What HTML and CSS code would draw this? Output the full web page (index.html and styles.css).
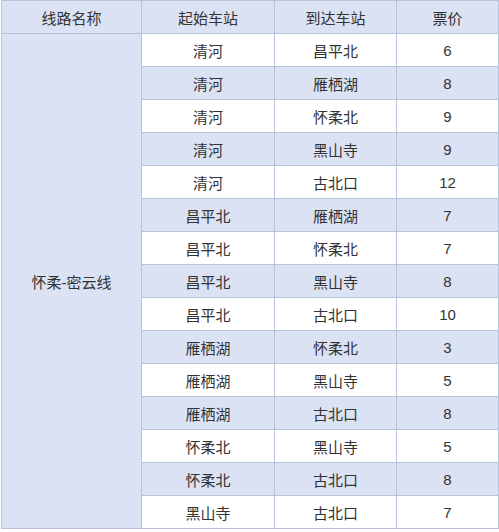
FILE: index.html
```html
<!DOCTYPE html>
<html lang="zh">
<head>
<meta charset="utf-8">
<link rel="stylesheet" href="styles.css">
</head>
<body>
<table class="fares">
  <colgroup>
    <col class="c1"><col class="c2"><col class="c3"><col class="c4">
  </colgroup>
  <thead>
    <tr><th>线路名称</th><th>起始车站</th><th>到达车站</th><th>票价</th></tr>
  </thead>
  <tbody>
    <tr><td class="line" rowspan="15">怀柔-密云线</td><td>清河</td><td>昌平北</td><td>6</td></tr>
    <tr class="alt"><td>清河</td><td>雁栖湖</td><td>8</td></tr>
    <tr><td>清河</td><td>怀柔北</td><td>9</td></tr>
    <tr class="alt"><td>清河</td><td>黑山寺</td><td>9</td></tr>
    <tr><td>清河</td><td>古北口</td><td>12</td></tr>
    <tr class="alt"><td>昌平北</td><td>雁栖湖</td><td>7</td></tr>
    <tr><td>昌平北</td><td>怀柔北</td><td>7</td></tr>
    <tr class="alt"><td>昌平北</td><td>黑山寺</td><td>8</td></tr>
    <tr><td>昌平北</td><td>古北口</td><td>10</td></tr>
    <tr class="alt"><td>雁栖湖</td><td>怀柔北</td><td>3</td></tr>
    <tr><td>雁栖湖</td><td>黑山寺</td><td>5</td></tr>
    <tr class="alt"><td>雁栖湖</td><td>古北口</td><td>8</td></tr>
    <tr><td>怀柔北</td><td>黑山寺</td><td>5</td></tr>
    <tr class="alt"><td>怀柔北</td><td>古北口</td><td>8</td></tr>
    <tr><td>黑山寺</td><td>古北口</td><td>7</td></tr>
  </tbody>
</table>
</body>
</html>
```

FILE: styles.css
```css
html, body {
  margin: 0;
  padding: 0;
  background: #ffffff;
}
body {
  padding-left: 1px;
  font-family: "Liberation Sans", "Noto Sans CJK SC", sans-serif;
  color: #333333;
}
.fares {
  border-collapse: collapse;
  table-layout: fixed;
  width: 497px;
  font-size: 15px;
}
.c1 { width: 140px; }
.c2 { width: 133px; }
.c3 { width: 122px; }
.c4 { width: 102px; }
.fares th, .fares td {
  border: 1px solid #b9c3d8;
  height: 32px;
  padding: 0;
  text-align: center;
  vertical-align: middle;
  font-weight: normal;
  background: #ffffff;
}
.fares th {
  background: #dae2f3;
}
.fares tr.alt td {
  background: #dae2f3;
}
.fares td.line {
  background: #dae2f3;
}
```
